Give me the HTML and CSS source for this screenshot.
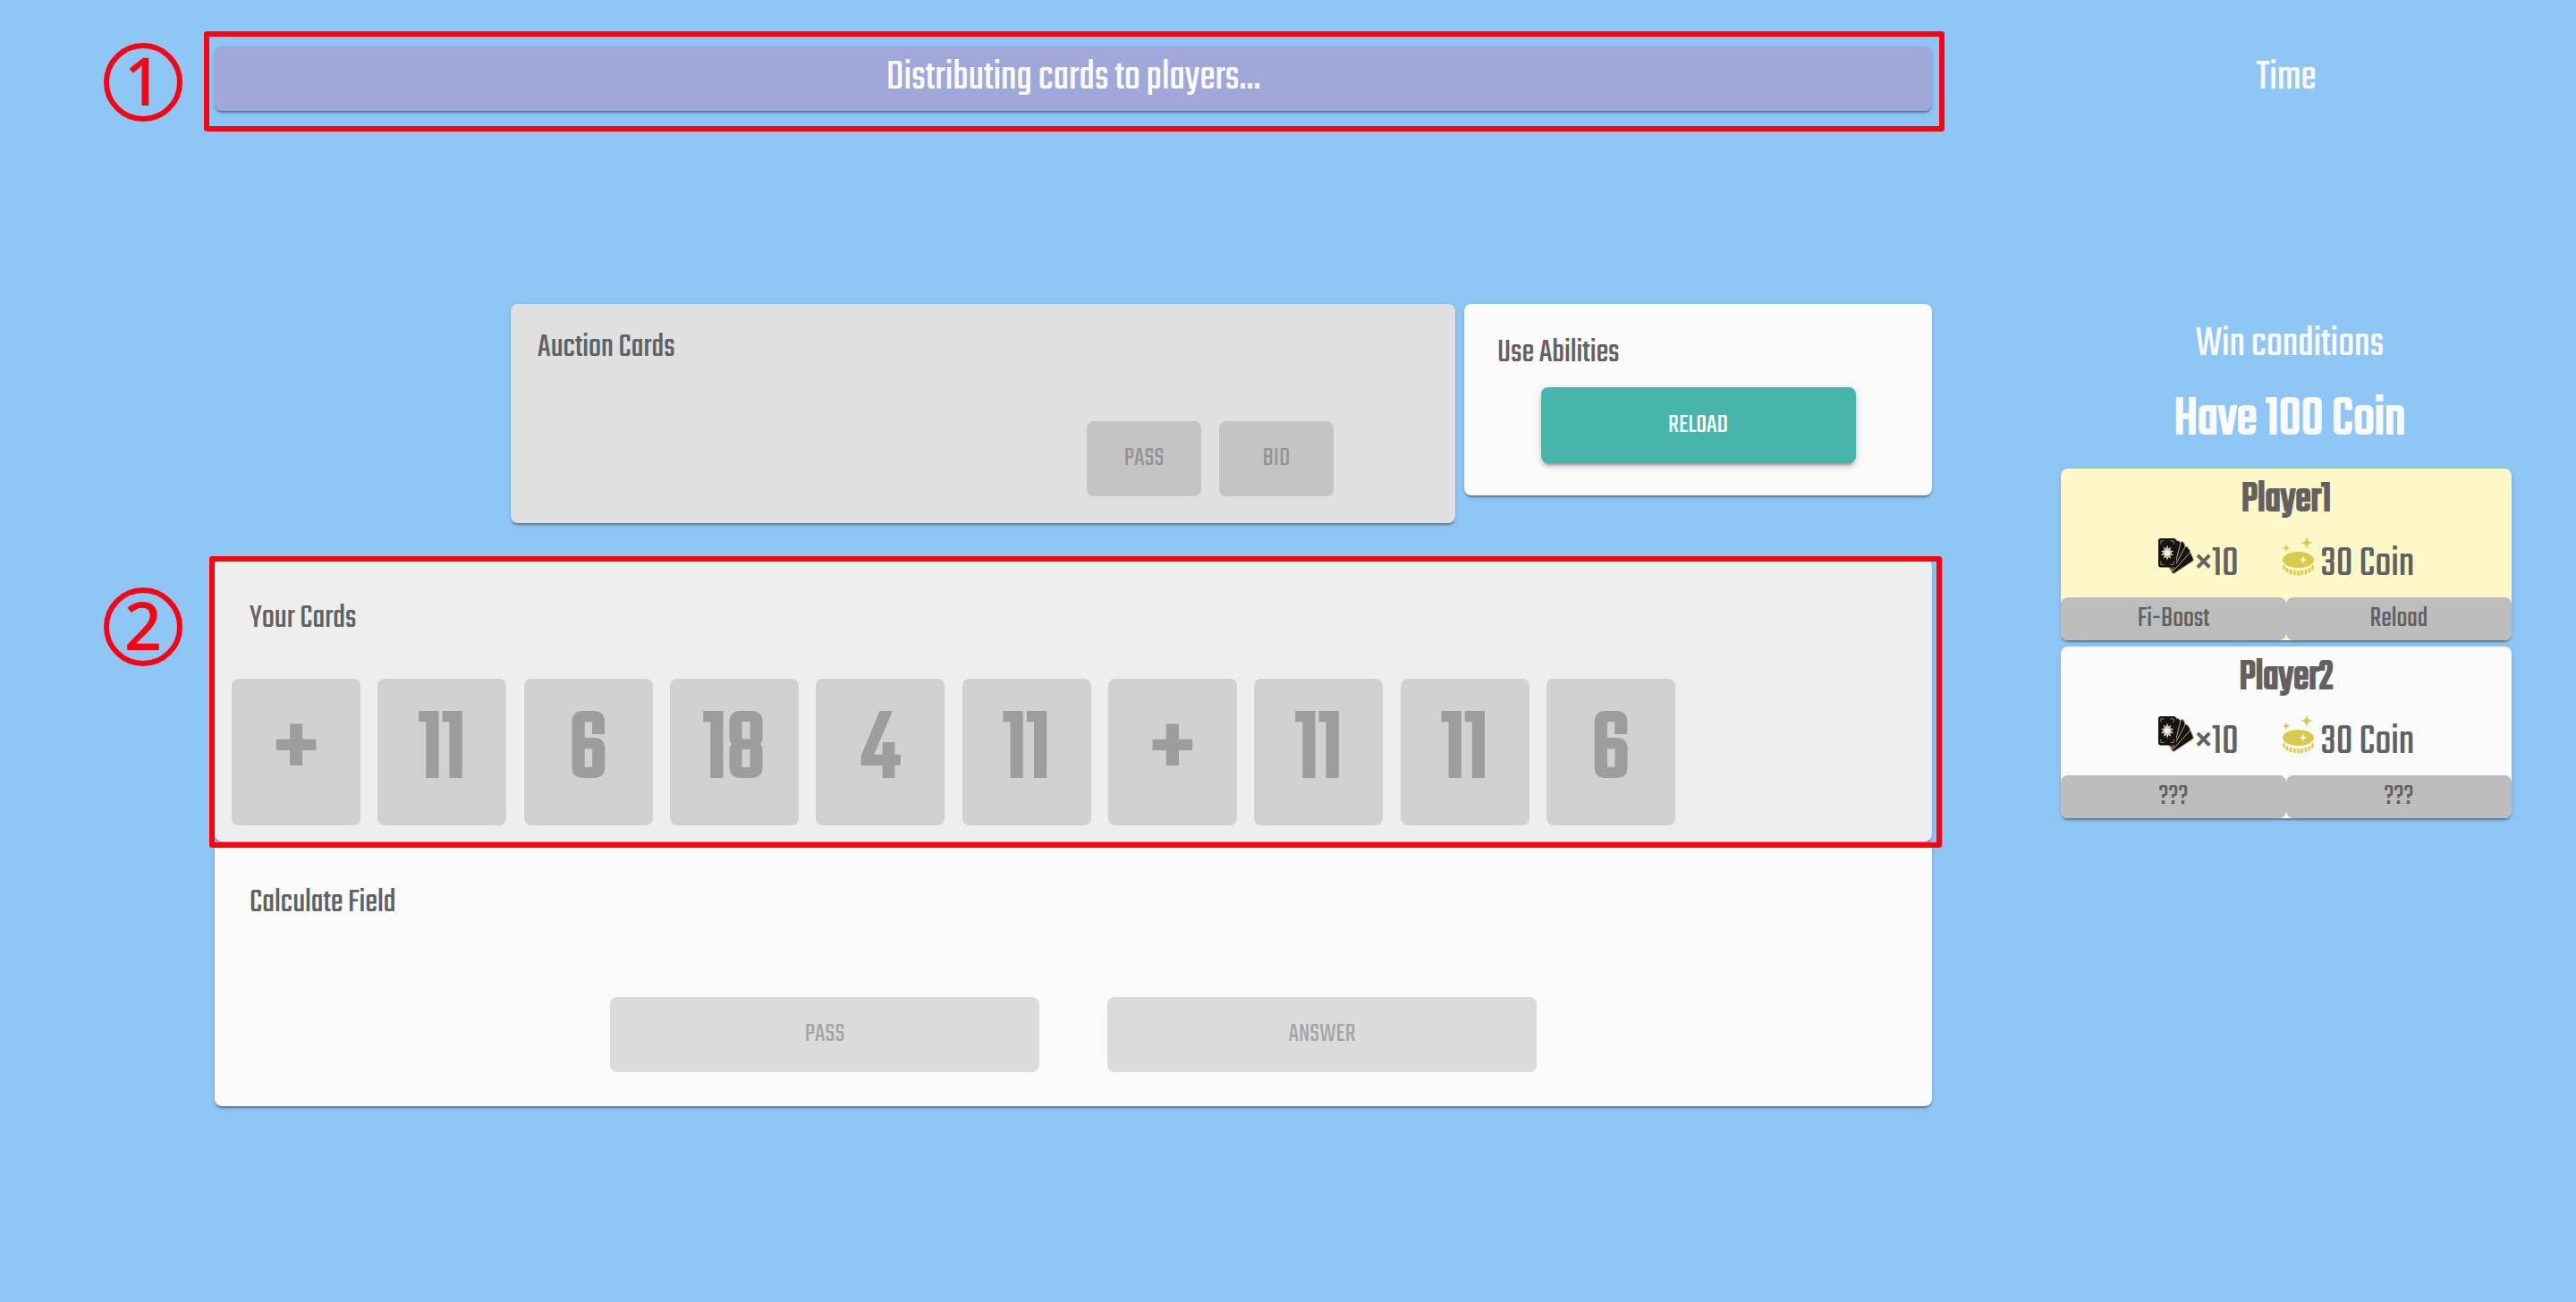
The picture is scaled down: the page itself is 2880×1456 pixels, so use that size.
FILE: index.html
```html
<!DOCTYPE html>
<html lang="en">
<head>
<meta charset="utf-8">
<meta name="viewport" content="width=device-width, initial-scale=1">
<title>Card auction</title>
<link rel="stylesheet" href="styles.css">
</head>
<body>
<svg class="defs" aria-hidden="true">
  <symbol id="icon-cards" viewBox="0 0 42 44">
    <g fill="#17130f" stroke="#b5b0a2" stroke-width="1" stroke-linejoin="round">
      <path d="M12 34L35 17Q37 16 38 18L41 25Q42 27 40 28L19 42Q17 43 16 41z"/>
      <path d="M12 34L31 11Q32 10 34 11L37 15Q38 17 37 18L17 40z"/>
      <path d="M12 34L26 6Q27 4 29 5L31 8Q32 10 31 12L17 38z"/>
      <path d="M12 34L21 3L24 4Q26 5 26 7L19 35z"/>
    </g>
    <rect x="0" y="1" width="21" height="34" rx="3" fill="#17130f"/>
    <path d="M3 8V4h4M14 4h4v4M3 28v4h4M14 32h4v-4" fill="none" stroke="#8d897f" stroke-width="1"/>
    <path d="M10.500 9l1.500 4 3-2-1 4 4 1-3 2 3 3-4 0 1 4-3-2-1.500 4-1.500-4-3 2 1-4-4 0 3-3-3-2 4-1-1-4 3 2z" fill="#c9c5b8"/>
    <circle cx="10.500" cy="18" r="3" fill="#f5f1e2"/>
  </symbol>
  <symbol id="icon-coin" viewBox="0 0 38 44">
    <g fill="#d6cb4b">
      <path d="M28 0c1 5 2 6 7 7-5 1-6 2-7 7-1-5-2-6-7-7 5-1 6-2 7-7z"/>
      <path d="M5 8c.600 3.500 1.500 4.400 5 5-3.500.600-4.400 1.500-5 5-.600-3.500-1.500-4.400-5-5 3.500-.600 4.400-1.500 5-5z"/>
      <path fill-rule="evenodd" d="M18.500 17C28.500 17 36 21 36 26s-7.500 9-17.500 9S1 31 1 26s7.500-9 17.500-9zm5.500 4c-.800 4-1.200 4.300-5 5 3.800.700 4.200 1 5 5 .800-4 1.200-4.300 5-5-3.800-.700-4.200-1-5-5z"/>
    </g>
    <path d="M1.500 32C4 35.500 10 37.500 18.500 37.500S33 35.500 35.500 32v4C34 40 27 43.500 18.500 43.500S3 40 1.500 36z" fill="#d6cb4b" opacity=".35"/>
    <path d="M2.500 32v5M6 35v5M10 37v5M14.500 38v5M18.500 38.500v5M22.500 38v5M27 37v5M31 35v5M34.500 32v5" stroke="#d6cb4b" stroke-width="2"/>
  </symbol>
</svg>

<div class="layout">
  <main class="board">
    <div class="status marked">
      <span class="marker">1</span>
      <p>Distributing cards to players...</p>
    </div>

    <div class="top-row">
      <section class="panel auction">
        <h2 class="title">Auction Cards</h2>
        <div class="auction-actions">
          <button class="button" disabled>Pass</button>
          <button class="button" disabled>Bid</button>
        </div>
      </section>
      <section class="panel abilities">
        <h2 class="title">Use Abilities</h2>
        <button class="button primary">Reload</button>
      </section>
    </div>

    <section class="panel hand marked">
      <span class="marker">2</span>
      <h2 class="title">Your Cards</h2>
      <div class="cards">
        <button class="card" disabled>+</button>
        <button class="card" disabled>11</button>
        <button class="card" disabled>6</button>
        <button class="card" disabled>18</button>
        <button class="card" disabled>4</button>
        <button class="card" disabled>11</button>
        <button class="card" disabled>+</button>
        <button class="card" disabled>11</button>
        <button class="card" disabled>11</button>
        <button class="card" disabled>6</button>
      </div>
    </section>

    <section class="panel calculate">
      <h2 class="title">Calculate Field</h2>
      <div class="calculate-actions">
        <button class="button" disabled>Pass</button>
        <button class="button" disabled>Answer</button>
      </div>
    </section>
  </main>

  <aside class="sidebar">
    <p class="time">Time</p>
    <div class="goal">
      <p>Win conditions</p>
      <p class="goal-value">Have 100 Coin</p>
    </div>
    <section class="player active">
      <h2 class="player-name">Player1</h2>
      <div class="stats">
        <span class="stat"><svg class="cards-icon" aria-hidden="true"><use href="#icon-cards"/></svg><span>×10</span></span>
        <span class="stat coins"><svg class="coin-icon" aria-hidden="true"><use href="#icon-coin"/></svg><span>30 Coin</span></span>
      </div>
      <div class="skills"><span class="skill">Fi-Boost</span><span class="skill">Reload</span></div>
    </section>
    <section class="player">
      <h2 class="player-name">Player2</h2>
      <div class="stats">
        <span class="stat"><svg class="cards-icon" aria-hidden="true"><use href="#icon-cards"/></svg><span>×10</span></span>
        <span class="stat coins"><svg class="coin-icon" aria-hidden="true"><use href="#icon-coin"/></svg><span>30 Coin</span></span>
      </div>
      <div class="skills"><span class="skill">???</span><span class="skill">???</span></div>
    </section>
  </aside>
</div>
</body>
</html>
```
FILE: styles.css
```css
* {
  box-sizing: border-box;
}

body {
  margin: 0;
  min-height: 100vh;
  background: #8ec7f6;
  color: #616161;
  font-family: Teko, "Roboto Condensed", sans-serif;
  font-size: 48px;
  line-height: 48px;
}

h2,
p {
  margin: 0;
  font-weight: 400;
}

.defs {
  display: none;
}

.layout {
  display: grid;
  grid-template-columns: 10fr 80fr 6fr 21fr 3fr;
  padding-top: 52px;
}

.board {
  grid-column: 2;
}

.sidebar {
  grid-column: 4;
}

.status,
.panel,
.player {
  border-radius: 8px;
  box-shadow: 0 4px 2px -2px rgba(0, 0, 0, .2), 0 2px 2px rgba(0, 0, 0, .14), 0 2px 6px rgba(0, 0, 0, .12);
}

.status {
  padding: 12px 0;
  background: #a0a7d9;
  color: #fafafa;
  text-align: center;
}

/* Numbered red outline around a part of the board */
.marked {
  position: relative;
}

.marked::after {
  content: "";
  position: absolute;
  inset: -17px -14px -23px -12px;
  border: 6px solid #ff0010;
  border-radius: 3px;
}

.hand.marked::after {
  inset: -4px -11px -7px -6px;
}

.marker {
  position: absolute;
  top: -4px;
  left: -124px;
  width: 88px;
  height: 88px;
  border: 6px solid #ff0010;
  border-radius: 50%;
  color: #ff0010;
  font: 500 74px/72px "Noto Sans", sans-serif;
  text-align: center;
}

.hand .marker {
  top: 31px;
}

.top-row {
  display: grid;
  grid-template-columns: 331fr 1056fr 10fr 523fr;
  align-items: start;
  margin-top: 216px;
}

.panel {
  background: #fafafa;
}

.title {
  font-size: 38px;
  line-height: 40px;
}

.button {
  height: 84px;
  padding: 0;
  border: 0;
  border-radius: 8px;
  background: #47b5ac;
  box-shadow: 0 6px 2px -4px rgba(0, 0, 0, .2), 0 4px 4px rgba(0, 0, 0, .14), 0 2px 10px rgba(0, 0, 0, .12);
  color: #fff;
  font: 400 30px/40px Teko, "Roboto Condensed", sans-serif;
  text-transform: uppercase;
}

.button:disabled,
.card:disabled {
  background: rgba(0, 0, 0, .12);
  box-shadow: none;
  color: rgba(0, 0, 0, .26);
}

.auction {
  grid-column: 2;
  padding: 29px 30px 30px;
  background: #e0e0e0;
}

.auction-actions {
  display: flex;
  justify-content: flex-end;
  gap: 20px;
  margin: 62px 106px 0 0;
}

.auction-actions .button {
  width: 128px;
}

.abilities {
  grid-column: 4;
  display: flex;
  flex-direction: column;
  padding: 35px 37px 36px;
}

.primary {
  align-self: center;
  width: 352px;
  height: 85px;
  margin-top: 18px;
}

.hand {
  margin-top: 41px;
  padding: 46px 19px 18px;
  background: #eee;
}

.hand .title {
  padding-left: 20px;
}

.cards {
  display: flex;
  justify-content: space-between;
  margin: 47px 268px 0 0;
}

.card {
  width: 144px;
  height: 164px;
  padding: 0;
  border: 0;
  border-radius: 8px;
  font: 400 112px/112px Teko, "Roboto Condensed", sans-serif;
}

.card:disabled {
  color: #9d9d9d;
  -webkit-text-stroke: 4px #9d9d9d;
}

.calculate {
  padding: 49px 39px 38px;
}

.calculate-actions {
  display: flex;
  justify-content: center;
  gap: 76px;
  margin-top: 85px;
}

.calculate-actions .button {
  width: 480px;
}

.sidebar {
  text-align: center;
}

.time {
  padding: 12px 0;
  color: #fafafa;
}

.goal {
  margin: 238px 0 22px;
  padding-left: 8px;
  color: #fafafa;
}

.goal-value {
  margin-top: 28px;
  font-size: 64px;
  line-height: 64px;
  -webkit-text-stroke: 2px;
}

.player {
  margin-top: 7px;
  padding-top: 12px;
  background: #fafafa;
}

.player.active {
  background: #fef7c8;
}

.player-name {
  font-size: 48px;
  -webkit-text-stroke: 2px;
}

.stats {
  display: flex;
  justify-content: center;
  gap: 48px;
  margin: 16px 0 12px;
}

.stat {
  display: flex;
  align-items: flex-end;
  gap: 2px;
  height: 56px;
}

.coins {
  gap: 6px;
}

.cards-icon,
.coin-icon {
  align-self: flex-start;
  width: 40px;
  height: 44px;
}

.coin-icon {
  width: 38px;
}

.skills {
  display: grid;
  grid-template-columns: 1fr 1fr;
}

.skill {
  border-radius: 8px;
  background: #bdbdbd;
  font-size: 32px;
}
```
